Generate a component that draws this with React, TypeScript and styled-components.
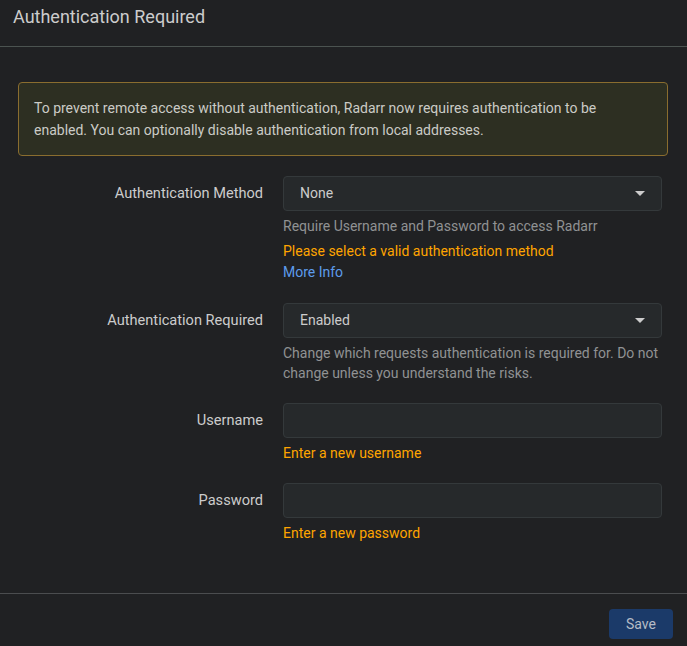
import React from 'react';
import styled, { createGlobalStyle } from 'styled-components';

const GlobalStyle = createGlobalStyle`
  html, body {
    margin: 0;
    padding: 0;
    background-color: #202123;
  }
  * {
    box-sizing: border-box;
  }
`;

const Modal = styled.div`
  width: 687px;
  height: 646px;
  overflow: hidden;
  background-color: #202123;
  font-family: Roboto, 'Liberation Sans', sans-serif;
  font-size: 14px;
  color: #cccccc;
`;

const Header = styled.div`
  height: 47px;
  padding: 5px 13px 0;
  border-bottom: 1px solid #4b5350;
  font-size: 18px;
  line-height: 24px;
  color: #cccccc;
`;

const Body = styled.div`
  padding: 35px 13px 30px;
`;

const Alert = styled.div`
  margin: 0 6px 20px 5px;
  padding: 14px 22px 14px 15px;
  border: 1px solid #8a6d2f;
  border-radius: 4px;
  background-color: #2d2f22;
  color: #cbcbc6;
  line-height: 22px;
`;

const Group = styled.div`
  display: flex;
  margin-bottom: 20px;
`;

const Label = styled.label`
  flex: 0 0 250px;
  margin-right: 20px;
  text-align: right;
  line-height: 35px;
  font-size: 14.6px;
  font-weight: 400;
  color: #cccccc;
`;

const Field = styled.div`
  flex: 0 0 379px;
  display: flex;
  flex-direction: column;
`;

const Select = styled.div`
  position: relative;
  height: 35px;
  padding: 0 16px;
  border: 1px solid #34393b;
  border-radius: 4px;
  background-color: #26292b;
  line-height: 33px;
  color: #cccccc;
`;

const Caret = styled.span`
  position: absolute;
  right: 16px;
  top: 14px;
  width: 0;
  height: 0;
  border-left: 5px solid transparent;
  border-right: 5px solid transparent;
  border-top: 5px solid #cccccc;
`;

const Input = styled.div`
  height: 35px;
  border: 1px solid #34393b;
  border-radius: 4px;
  background-color: #26292b;
`;

const Help = styled.div<{ $kind?: 'warning' }>`
  margin-top: 5px;
  line-height: 20px;
  color: ${(p) => (p.$kind === 'warning' ? '#ffa500' : '#909293')};
`;

const MoreInfo = styled.a`
  margin-top: 1px;
  margin-bottom: 1px;
  line-height: 20px;
  color: #5d9cec;
  text-decoration: none;
`;

const Footer = styled.div`
  display: flex;
  justify-content: flex-end;
  padding: 15px 14px;
  border-top: 1px solid #4b4d4f;
`;

const SaveButton = styled.button`
  width: 64px;
  height: 30px;
  border: none;
  border-radius: 4px;
  background-color: #1b3a69;
  color: #b5bcc6;
  font-family: Roboto, 'Liberation Sans', sans-serif;
  font-size: 14px;
`;

const App = () => {
  return (
    <Modal>
      <GlobalStyle />
      <Header>Authentication Required</Header>
      <Body>
        <Alert>
          To prevent remote access without authentication, Radarr now requires authentication to be
          enabled. You can optionally disable authentication from local addresses.
        </Alert>

        <Group>
          <Label>Authentication Method</Label>
          <Field>
            <Select>
              None
              <Caret />
            </Select>
            <Help>Require Username and Password to access Radarr</Help>
            <Help $kind="warning">Please select a valid authentication method</Help>
            <MoreInfo href="#">More Info</MoreInfo>
          </Field>
        </Group>

        <Group>
          <Label>Authentication Required</Label>
          <Field>
            <Select>
              Enabled
              <Caret />
            </Select>
            <Help>
              Change which requests authentication is required for. Do not change unless you
              understand the risks.
            </Help>
          </Field>
        </Group>

        <Group>
          <Label>Username</Label>
          <Field>
            <Input />
            <Help $kind="warning">Enter a new username</Help>
          </Field>
        </Group>

        <Group>
          <Label>Password</Label>
          <Field>
            <Input />
            <Help $kind="warning">Enter a new password</Help>
          </Field>
        </Group>
      </Body>
      <Footer>
        <SaveButton>Save</SaveButton>
      </Footer>
    </Modal>
  );
};

export default App;
